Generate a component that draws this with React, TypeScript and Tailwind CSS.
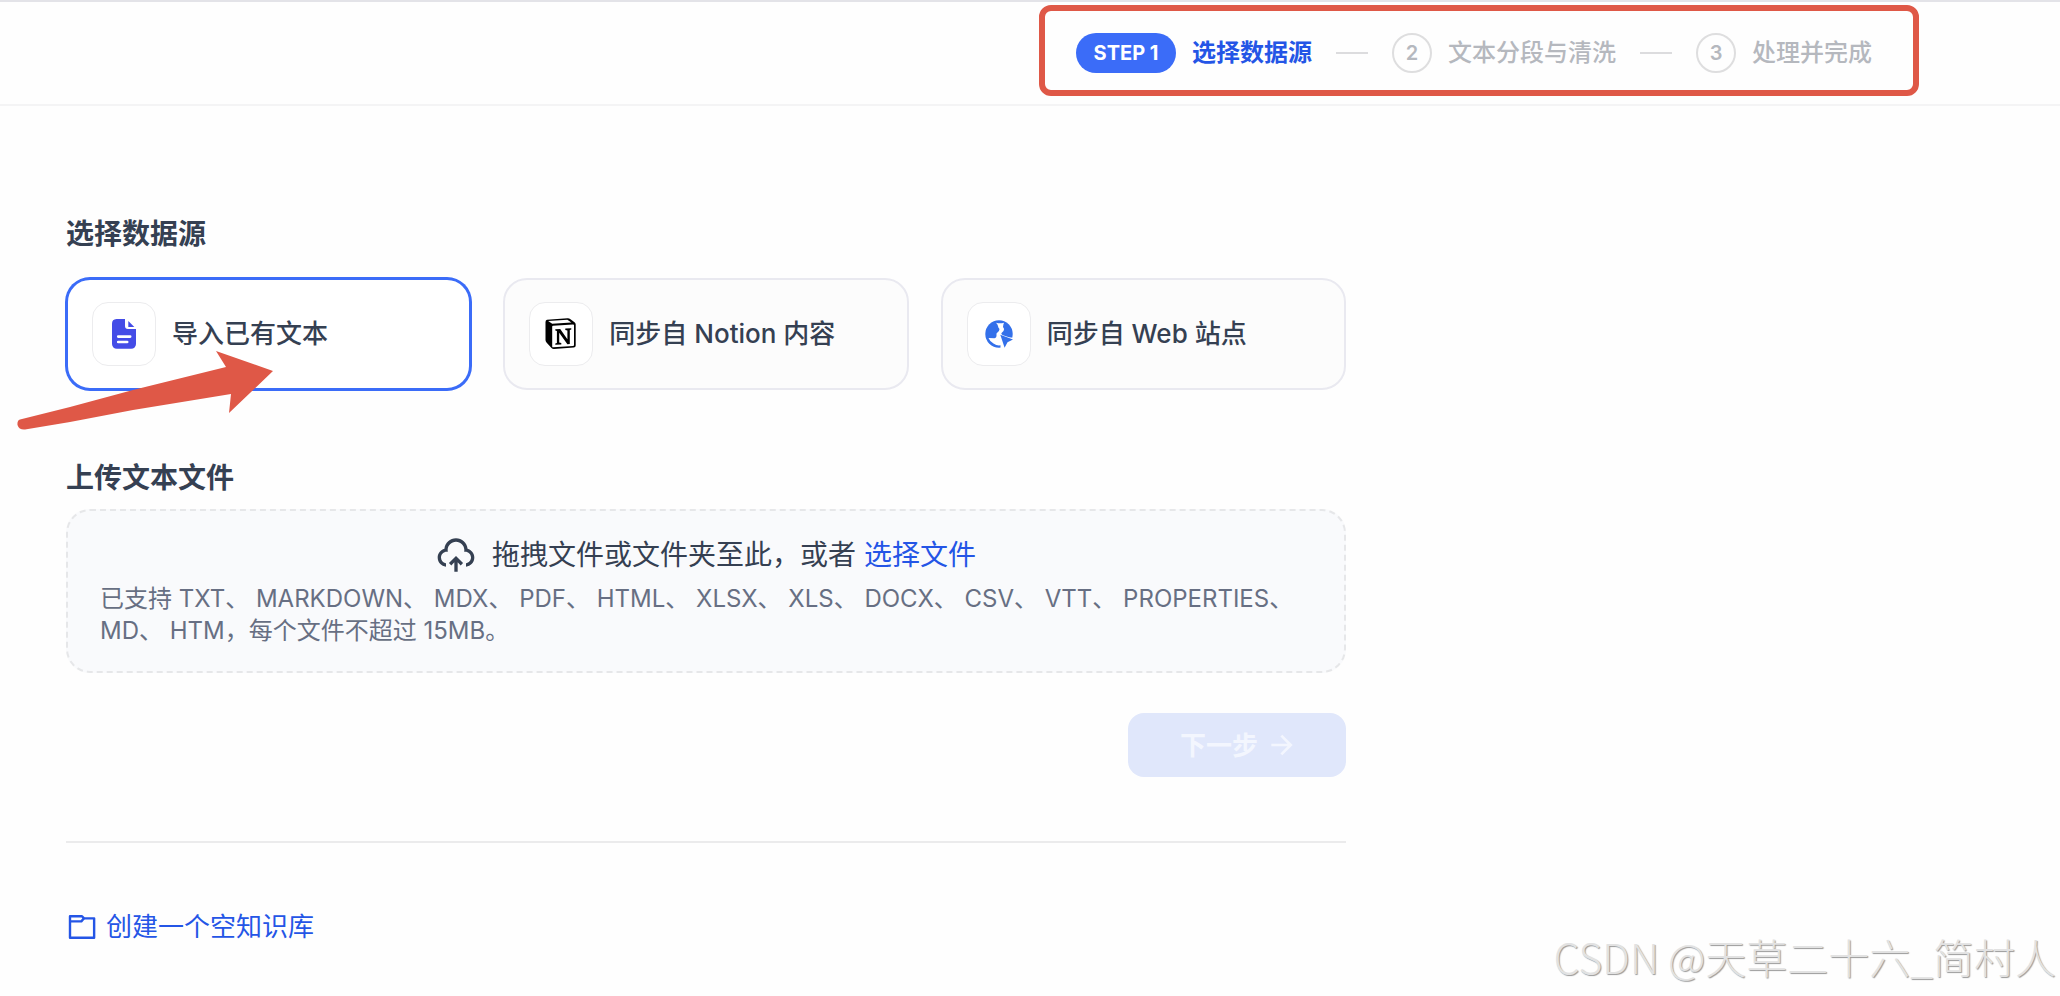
import React from "react";
import { RiUploadCloud2Line, RiArrowRightLine } from "react-icons/ri";

const CARD =
  "flex h-28 items-center gap-4 rounded-3xl border-2 px-6 text-left text-[26px] leading-9 font-medium text-[#354052]";

function FileIcon() {
  return (
    <svg className="size-8" viewBox="0 0 32 32" aria-hidden="true">
      <path
        d="M8.500 1H17v7a3 3 0 0 0 3 3h8v15a4.800 4.800 0 0 1-4.800 4.800H8.800A4.800 4.800 0 0 1 4 26V5.800A4.800 4.800 0 0 1 8.500 1z"
        fill="#444ce7"
      />
      <path d="M20.300 3l6 6h-6z" fill="#444ce7" />
      <path d="M10.200 18.600h12M10.200 24h9" stroke="#fff" strokeWidth="2.600" strokeLinecap="round" />
    </svg>
  );
}

function NotionIcon() {
  return (
    <svg className="size-8" viewBox="0 0 32 32" aria-hidden="true">
      <path
        d="M2 1.800L22.500.300Q24 .200 25.500 1.200L29.500 4.200Q30.700 5 30.700 6.500V27.500Q30.700 29.500 28.700 29.600L9 31Q7.500 31.100 6.500 29.900L1.500 24.500Q.500 23.300.500 22V4Q.500 2 2 1.800Z"
        fill="#000"
      />
      <path d="M3.200 3L22.300 1.700 26.400 4.400 7.200 5.800Z" fill="#fff" />
      <path d="M8 7.700L28 6.400Q29 6.300 29 7.300V27Q29 28 28 28.100L8.200 29.300Q7.200 29.300 7.200 28.400V8.700Q7.200 7.800 8 7.700Z" fill="#fff" />
      <path
        d="M10.300 11.200L15.200 10.900 22.400 21.300V12.400L20.300 12V10.600L26.300 10.200V11.500L24.800 12.100V26L22.400 26.200 14.200 14.700V24.600L16.300 25.100V26.400L10.300 26.800V25.500L11.900 24.900V12.900L10.300 12.600Z"
        fill="#000"
      />
    </svg>
  );
}

function WebIcon() {
  return (
    <svg className="size-8" viewBox="0 0 32 32" aria-hidden="true">
      <circle cx="16" cy="16" r="13.700" fill="#3370ea" />
      <path
        d="M13 4.700Q17 5.700 21 4.700Q20.300 6 20 9Q22 11 20.500 13L18.300 15.200Q18.500 16.500 20 17.300L26 19.300 32 20V32H17.500V27.300Q14 28 10.500 25.500Q6.500 23 5.500 20L11.500 20.300Q13.500 20 13.500 18V15.500Q16.700 13.500 16.500 11Q15 9.500 15 8Q14.500 6 13 4.700Z"
        fill="#fff"
      />
      <path d="M17.300 16.800L30 21.600 24.500 24.300 21.600 29.800Z" fill="#3370ea" />
    </svg>
  );
}

function FolderIcon() {
  return (
    <svg
      className="size-8"
      viewBox="0 0 24 24"
      aria-hidden="true"
      fill="none"
      stroke="currentColor"
      strokeWidth="1.800"
      strokeLinejoin="round"
    >
      <path d="M3 3.900H12L13.500 5.500H21.100V20.100H3Z" />
      <path d="M3 7.800H11.500L13.500 5.500" />
    </svg>
  );
}

function IconTile({ children }: { children: React.ReactNode }) {
  return (
    <span className="flex size-16 shrink-0 items-center justify-center rounded-2xl border border-[#ececee] bg-white">
      {children}
    </span>
  );
}

function Divider() {
  return <li aria-hidden="true" className="h-0.5 w-8 bg-[#dcdcde]" />;
}

function PendingStep({ n, label }: { n: number; label: string }) {
  return (
    <li className="flex items-center gap-4">
      <span className="flex size-10 items-center justify-center rounded-full border-2 border-[#dededf] text-[20px] font-semibold">
        {n}
      </span>
      <span className="text-2xl font-medium">{label}</span>
    </li>
  );
}

export default function App() {
  return (
    <div className="relative min-h-screen bg-[#fefefe] font-['Inter','Noto_Sans_CJK_SC',sans-serif]">
      <header className="flex h-[106px] items-center justify-end border-t-2 border-b-2 border-t-[#e3e3e8] border-b-[#f4f4f5] pr-[188px]">
        <nav aria-label="步骤" className="relative">
          <ol className="flex items-center gap-6 text-[#b5b8be]">
            <li className="flex items-center gap-4" aria-current="step">
              <span className="flex h-10 w-[100px] items-center justify-center rounded-full bg-[#3b6cf8] text-[20px] font-bold text-white">
                STEP 1
              </span>
              <span className="text-2xl font-bold text-[#2455e6]">选择数据源</span>
            </li>
            <Divider />
            <PendingStep n={2} label="文本分段与清洗" />
            <Divider />
            <PendingStep n={3} label="处理并完成" />
          </ol>
          <span className="pointer-events-none absolute -top-7 -right-[47px] -bottom-[23px] -left-[37px] rounded-xl border-6 border-[#df5847]" />
        </nav>
      </header>

      <main className="ml-[66px] w-full max-w-[1280px]">
        <h2 className="pt-[108px] text-[28px] leading-10 font-bold text-[#354052]">选择数据源</h2>
        <div className="relative mt-6 grid grid-cols-3 gap-8">
          <button type="button" className={`${CARD} border-[#3b6cf8] bg-white ring-1 ring-[#3b6cf8]`}>
            <IconTile><FileIcon /></IconTile>
            导入已有文本
          </button>
          <button type="button" className={`${CARD} border-[#e9e9f0] bg-[#fcfcfc]`}>
            <IconTile><NotionIcon /></IconTile>
            同步自 Notion 内容
          </button>
          <button type="button" className={`${CARD} border-[#e9e9f0] bg-[#fcfcfc]`}>
            <IconTile><WebIcon /></IconTile>
            同步自 Web 站点
          </button>
          <svg
            className="pointer-events-none absolute top-[72px] -left-[50px] h-[82px] w-[260px]"
            viewBox="0 0 260 82"
            aria-hidden="true"
          >
            <path
              d="M4 69.500L54 57L117 40L210 17L200 1L257 21L213 63L215 44L117 60L54 72L9 79.500Q3 80 1.500 75Q1 70.500 4 69.500Z"
              fill="#df5847"
            />
          </svg>
        </div>

        <h2 className="mt-[68px] text-[28px] leading-10 font-bold text-[#354052]">上传文本文件</h2>
        <section className="mt-[11px] h-[164px] rounded-3xl border-2 border-dashed border-[#e6e7e9] bg-[#f9fafc] px-8 pt-6">
          <div className="flex h-10 items-center justify-center gap-4 text-[28px] text-[#354052]">
            <RiUploadCloud2Line className="size-10" />
            <p>
              拖拽文件或文件夹至此，或者 <button type="button" className="text-[#2455e6]">选择文件</button>
            </p>
          </div>
          <p className="mt-2 text-2xl text-[#676f83]">
            已支持 TXT、 MARKDOWN、 MDX、 PDF、 HTML、 XLSX、 XLS、 DOCX、 CSV、 VTT、 PROPERTIES、 MD、 HTM，每个文件不超过 15MB。
          </p>
        </section>

        <div className="mt-10 flex justify-end">
          <button
            type="button"
            disabled
            className="flex h-16 items-center gap-2 rounded-2xl bg-[#e0e7fb] pr-12 pl-[52px] text-[26px] font-bold text-[#f3f6fe]"
          >
            下一步
            <RiArrowRightLine className="size-8" />
          </button>
        </div>

        <hr className="mt-16 border-t-2 border-[#ebebec]" />
        <a href="#empty" className="mt-16 inline-flex items-center gap-2 text-[26px] leading-10 text-[#2455e6]">
          <FolderIcon />
          创建一个空知识库
        </a>
      </main>

      <p className="pointer-events-none absolute right-1 bottom-3 font-['Noto_Sans_CJK_SC',sans-serif] text-[41px] leading-[56px] font-light text-[#e2e2e2] [text-shadow:1px_1px_1px_#999]">
        CSDN @天草二十六_简村人
      </p>
    </div>
  );
}
